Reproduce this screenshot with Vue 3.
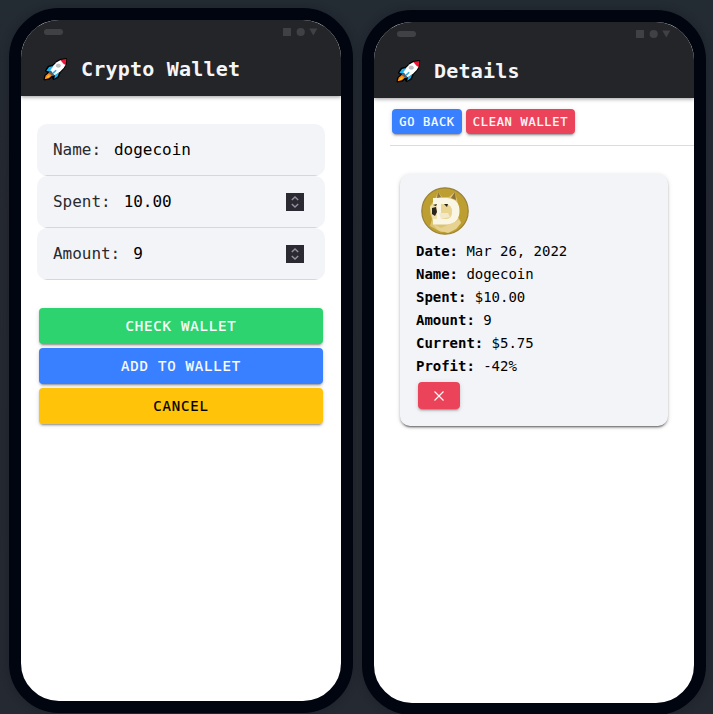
<script setup>
import { h } from 'vue'

const fields = [
  { label: 'Name:', value: 'dogecoin', numeric: false },
  { label: 'Spent:', value: '10.00', numeric: true },
  { label: 'Amount:', value: '9', numeric: true },
]
const actions = [
  { text: 'CHECK WALLET', tone: 'success' },
  { text: 'ADD TO WALLET', tone: 'primary' },
  { text: 'CANCEL', tone: 'warning' },
]
const details = [
  ['Date:', 'Mar 26, 2022'],
  ['Name:', 'dogecoin'],
  ['Spent:', '$10.00'],
  ['Amount:', '9'],
  ['Current:', '$5.75'],
  ['Profit:', '-42%'],
]

const StatusBar = () =>
  h('svg', { class: 'block', width: 320, height: 24, viewBox: '0 0 320 24', fill: '#404145' }, [
    h('rect', { x: 23, y: 9, width: 19, height: 6, rx: 3 }),
    h('rect', { x: 262, y: 8, width: 8, height: 8, rx: 0.5 }),
    h('circle', { cx: 279.7, cy: 12, r: 4.1 }),
    h('path', { d: 'M288.3 8.5h8l-4 7z' }),
  ])

const Rocket = () =>
  h('svg', { class: 'block', width: 25, height: 23, viewBox: '23 25 75 69' }, [
    h('path', {
      d: 'M94 27 75 29 62 36 53 46 38 50 30 64 38 69 28 78 26 91 43 88 50 82 54 90 69 83 75 68 87 55 93 42Z',
      fill: '#000', stroke: '#000', 'stroke-width': 3, 'stroke-linejoin': 'round',
    }),
    h('path', { d: 'M53 49 41 52 33 63 45 66ZM59 76 57 87 67 80 72 67Z', fill: '#19b3ef' }),
    h('path', { d: 'M41 69 31 78 28 89 41 86 51 77Z', fill: '#ff8a18' }),
    h('path', { d: 'M40 77 35 81 33 86 40 83 44 79Z', fill: '#ffc72b' }),
    h('path', { d: 'M44 63 40 69 52 80 59 76Z', fill: '#59626d' }),
    h('path', { d: 'M45 62 55 47 64 38 76 31 91 45 85 55 74 66 58 77Z', fill: '#fff' }),
    h('path', { d: 'M75 31 93 28 91 46 85 43Z', fill: '#ed1733' }),
    h('path', { d: 'M61 60 64 63 55 72 51 69Z', fill: '#25aee8' }),
    h('ellipse', { cx: 69, cy: 48, rx: 6.5, ry: 5, fill: '#c3c3c5', stroke: '#a3a5a8', 'stroke-width': 1.5 }),
  ])
</script>

<template>
  <main class="stage">
    <section class="phone">
      <header class="top">
        <StatusBar />
        <div class="title"><Rocket /><h1>Crypto Wallet</h1></div>
      </header>
      <div class="form">
        <div v-for="f in fields" :key="f.label" class="item">
          <span class="label">{{ f.label }}</span>
          <span class="value">{{ f.value }}</span>
          <svg v-if="f.numeric" class="spinner" width="18" height="18" viewBox="0 0 18 18">
            <rect width="18" height="18" fill="#2b2a33" />
            <path d="M5.8 7 9 3.9 12.2 7M5.8 11 9 14.1 12.2 11" fill="none" stroke="#92919d" stroke-width="1.4" />
          </svg>
        </div>
      </div>
      <div class="actions">
        <button v-for="a in actions" :key="a.text" class="btn wide" :class="a.tone">{{ a.text }}</button>
      </div>
    </section>

    <section class="phone second">
      <header class="top">
        <StatusBar />
        <div class="title"><Rocket /><h1>Details</h1></div>
      </header>
      <div class="toolbar">
        <button class="btn small primary">GO BACK</button>
        <button class="btn small clean danger">CLEAN WALLET</button>
      </div>
      <article class="card">
        <svg class="coin" width="48" height="48" viewBox="0 0 48 48">
          <circle cx="24" cy="24" r="23.2" fill="#bd9f31" stroke="#9a8139" stroke-width="1.2" />
          <path d="M9 39 11 32 9 26 9 19 14 12 17 5 21 10 28 10 34 5 36 13 38 21 37 30 40 35 36 41 29 45 20 45Z" fill="#dcc477" />
          <path d="M17 5 16 11 20 10ZM34 5 30 11 35 13Z" fill="#8d713a" />
          <path d="M12 37 20 41 38 33 40 36 35 42 27 46 17 43Z" fill="#e7d291" />
          <path d="M9 20 17 12 27 13 33 20 32 31 24 36 12 34Z" fill="#efe1b2" />
          <path fill-rule="evenodd" d="M12 11H26Q38.5 12 38.5 24T26 37.5H12V32H16V17H12ZM20 17V32H25Q31 31 31 24.5T25 17Z" fill="#faf6e6" />
          <path d="M20 17H25Q31 18 31 25T25 32H20Z" fill="#ead590" />
          <path d="M18 26 27 26 29 30 20 32Z" fill="#f2e8ca" />
          <path d="M11 21 15 20 16 25 14 29 11 27Z" fill="#29251c" />
          <path d="M12 18 16 17 15 19ZM23 17 27 17 26 20Z" fill="#292217" />
        </svg>
        <p v-for="d in details" :key="d[0]" class="row"><b>{{ d[0] }}</b> {{ d[1] }}</p>
        <button class="btn remove danger" aria-label="Remove">
          <svg width="12" height="12" viewBox="0 0 12 12"><path d="M1.5 1.5l9 9M10.5 1.5l-9 9" stroke="#fff" stroke-width="1.1" /></svg>
        </button>
      </article>
    </section>
  </main>
</template>

<style>
body { margin: 0; overflow: hidden; }
</style>

<style scoped>
.stage {
  box-sizing: border-box;
  width: 713px;
  height: 714px;
  padding: 8px 0 0 9px;
  display: flex;
  align-items: flex-start;
  gap: 9px;
  overflow: hidden;
  background: linear-gradient(#232b33, #252931 30%, #242932);
  font-family: "DejaVu Sans Mono", "Liberation Mono", monospace;
  color: #000;
}
.phone {
  box-sizing: border-box;
  flex: none;
  width: 344px;
  height: 705px;
  border: 12px solid #01050f;
  border-radius: 50px;
  overflow: hidden;
  background: #fff;
  box-shadow: 0 0 8px rgba(20, 21, 25, .35);
}
.second { margin-top: 2px; }
.top {
  height: 76px;
  background: #242529;
  box-shadow: 0 1px 4px rgba(0, 0, 0, .4);
}
.top :deep(svg), .block { display: block; }
.title {
  height: 50px;
  padding-left: 22px;
  display: flex;
  align-items: center;
  gap: 13px;
}
h1 {
  margin: 0;
  font-size: 20px;
  line-height: 24px;
  letter-spacing: .21px;
  color: #f4f5f8;
}
.form { margin: 28px 16px 0; }
.item {
  box-sizing: border-box;
  height: 52px;
  padding: 0 21px 1px 16px;
  display: flex;
  align-items: center;
  border-radius: 10px;
  background: linear-gradient(#f3f4f8 51px, #d5d7db 51px);
  font-size: 16px;
  letter-spacing: -.03px;
}
.label { margin-right: 13px; color: #292a2e; }
.spinner { margin: 1px 0 0 auto; }
.actions {
  padding: 28px 18px 0;
  display: grid;
  gap: 4px;
}
.btn {
  box-sizing: border-box;
  padding: 0;
  border: 0;
  border-radius: 4px;
  color: #fff;
  font-family: inherit;
  white-space: nowrap;
  box-shadow: 0 3px 1px -2px rgba(0, 0, 0, .2), 0 2px 2px rgba(0, 0, 0, .14), 0 1px 5px rgba(0, 0, 0, .12);
}
.wide {
  height: 36px;
  font-size: 14px;
  letter-spacing: .81px;
  -webkit-text-stroke: .2px;
}
.success { background: #2dd36f; }
.primary { background: #3880ff; }
.warning { background: #ffc409; color: #000; }
.danger { background: #eb445a; }
.toolbar {
  height: 48px;
  box-sizing: border-box;
  margin-left: 16px;
  padding: 11px 0 0 2px;
  display: flex;
  align-items: flex-start;
  gap: 4px;
  border-bottom: 1px solid #dcdcdc;
}
.small {
  width: 70px;
  height: 25px;
  font-size: 12px;
  letter-spacing: .72px;
  -webkit-text-stroke: .2px;
}
.clean { width: 109px; }
.card {
  box-sizing: border-box;
  width: 268px;
  height: 252px;
  margin: 28px 0 0 26px;
  padding: 13px 16px;
  border-radius: 10px;
  background: #f3f4f8;
  box-shadow: 0 3px 1px -2px rgba(0, 0, 0, .3), 0 2px 2px rgba(0, 0, 0, .24), 0 1px 5px rgba(0, 0, 0, .14);
}
.coin { display: block; margin: 0 0 5px 5px; }
.row {
  margin: 0;
  height: 23px;
  font-size: 14px;
  line-height: 23px;
  letter-spacing: -.03px;
}
.remove {
  width: 42px;
  height: 27px;
  margin: 4px 0 0 2px;
  display: flex;
  align-items: center;
  justify-content: center;
}
</style>
